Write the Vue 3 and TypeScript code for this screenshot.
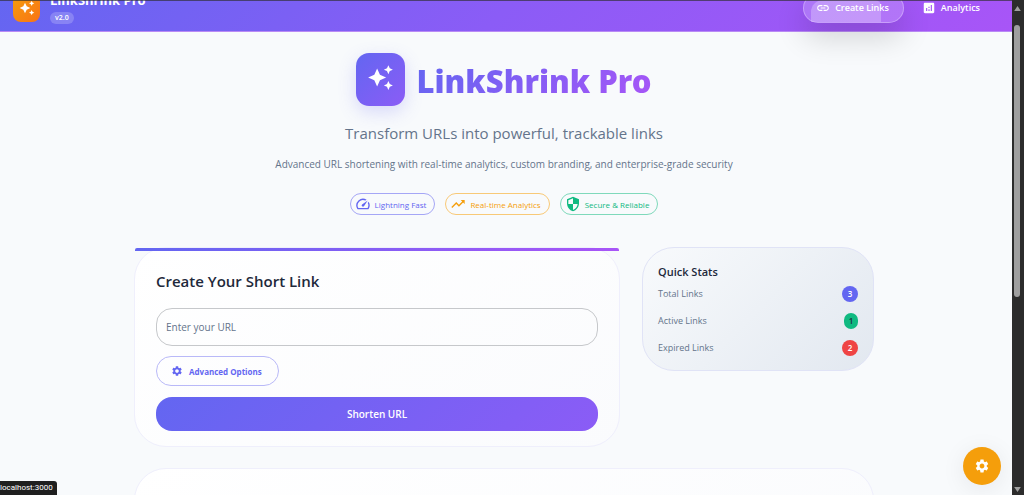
<script setup lang="ts">
import { ref } from 'vue'

interface Feature {
  label: string
  tone: string
  paths: string[]
}

interface Stat {
  label: string
  value: number
  tone: string
}

const sparkle =
  'm19 9 1.25-2.75L23 5l-2.75-1.25L19 1l-1.25 2.75L15 5l2.75 1.25L19 9zm-7.5.5L9 4 6.5 9.5 1 12l5.5 2.5L9 20l2.5-5.5L17 12l-5.5-2.5zM19 15l-1.25 2.75L15 19l2.75 1.25L19 23l1.25-2.75L23 19l-2.75-1.25L19 15z'
const gear =
  'M19.14 12.94c.04-.3.06-.61.06-.94 0-.32-.02-.64-.07-.94l2.03-1.58c.18-.14.23-.41.12-.61l-1.92-3.32c-.12-.22-.37-.29-.59-.22l-2.39.96c-.5-.38-1.03-.7-1.62-.94l-.36-2.54c-.04-.24-.24-.41-.48-.41h-3.84c-.24 0-.43.17-.47.41l-.36 2.54c-.59.24-1.13.57-1.62.94l-2.39-.96c-.22-.08-.47 0-.59.22L2.74 8.87c-.12.21-.08.47.12.61l2.03 1.58c-.05.3-.09.63-.09.94s.02.64.07.94l-2.03 1.58c-.18.14-.23.41-.12.61l1.92 3.32c.12.22.37.29.59.22l2.39-.96c.5.38 1.03.7 1.62.94l.36 2.54c.05.24.24.41.48.41h3.84c.24 0 .44-.17.47-.41l.36-2.54c.59-.24 1.13-.56 1.62-.94l2.39.96c.22.08.47 0 .59-.22l1.92-3.32c.12-.22.07-.47-.12-.61l-2.01-1.58zM12 15.6c-1.98 0-3.6-1.62-3.6-3.6s1.62-3.6 3.6-3.6 3.6 1.62 3.6 3.6-1.62 3.6-3.6 3.6z'

const features: Feature[] = [
  {
    label: 'Lightning Fast',
    tone: 'indigo',
    paths: [
      'm20.38 8.57-1.23 1.85a8 8 0 0 1-.22 7.58H5.07A8 8 0 0 1 15.58 6.85l1.85-1.23A10 10 0 0 0 3.35 19a2 2 0 0 0 1.72 1h13.85a2 2 0 0 0 1.74-1 10 10 0 0 0-.27-10.44z',
      'M10.59 15.41a2 2 0 0 0 2.83 0l5.66-8.49-8.49 5.66a2 2 0 0 0 0 2.83z',
    ],
  },
  {
    label: 'Real-time Analytics',
    tone: 'amber',
    paths: ['m16 6 2.29 2.29-4.88 4.88-4-4L2 16.59 3.41 18l6-6 4 4 6.3-6.29L22 12V6z'],
  },
  {
    label: 'Secure & Reliable',
    tone: 'green',
    paths: [
      'M12 1 3 5v6c0 5.55 3.84 10.74 9 12 5.16-1.26 9-6.45 9-12V5l-9-4zm0 10.99h7c-.53 4.12-3.28 7.79-7 8.94V12H5V6.3l7-3.11v8.8z',
    ],
  },
]

const stats: Stat[] = [
  { label: 'Total Links', value: 3, tone: 'indigo' },
  { label: 'Active Links', value: 1, tone: 'green' },
  { label: 'Expired Links', value: 2, tone: 'red' },
]

const url = ref('')
</script>

<template>
  <div class="window">
    <div class="page">
      <header class="header">
        <div class="brand">
          <span class="brand-icon">
            <svg viewBox="0 0 24 24" aria-hidden="true"><path :d="sparkle" /></svg>
          </span>
          <div class="brand-text">
            <span class="brand-name">LinkShrink Pro</span>
            <span class="version">v2.0</span>
          </div>
        </div>
        <nav class="nav">
          <button type="button" class="nav-button active">
            <svg viewBox="0 0 24 24" aria-hidden="true">
              <path d="M3.9 12c0-1.71 1.39-3.1 3.1-3.1h4V7H7c-2.76 0-5 2.24-5 5s2.24 5 5 5h4v-1.9H7c-1.71 0-3.1-1.39-3.1-3.1zM8 13h8v-2H8v2zm9-6h-4v1.9h4c1.71 0 3.1 1.39 3.1 3.1s-1.39 3.1-3.1 3.1h-4V17h4c2.76 0 5-2.24 5-5s-2.24-5-5-5z" />
            </svg>
            <span>Create Links</span>
          </button>
          <button type="button" class="nav-button">
            <svg viewBox="0 0 24 24" aria-hidden="true">
              <path d="M19 3H5c-1.1 0-2 .9-2 2v14c0 1.1.9 2 2 2h14c1.1 0 2-.9 2-2V5c0-1.1-.9-2-2-2zM9 17H7v-5h2v5zm4 0h-2v-3h2v3zm0-5h-2v-2h2v2zm4 5h-2V7h2v10z" />
            </svg>
            <span>Analytics</span>
          </button>
        </nav>
      </header>

      <main class="content">
        <section class="hero">
          <div class="hero-title">
            <span class="hero-icon">
              <svg viewBox="0 0 24 24" aria-hidden="true"><path :d="sparkle" /></svg>
            </span>
            <h1>LinkShrink Pro</h1>
          </div>
          <p class="tagline">Transform URLs into powerful, trackable links</p>
          <p class="description">
            Advanced URL shortening with real-time analytics, custom branding, and enterprise-grade security
          </p>
          <ul class="features">
            <li v-for="feature in features" :key="feature.label" :class="['feature', feature.tone]">
              <svg viewBox="0 0 24 24" aria-hidden="true">
                <path v-for="d in feature.paths" :key="d" :d="d" />
              </svg>
              <span>{{ feature.label }}</span>
            </li>
          </ul>
        </section>

        <div class="columns">
          <form class="card create" @submit.prevent>
            <h2>Create Your Short Link</h2>
            <input v-model="url" class="url" type="text" placeholder="Enter your URL" aria-label="Enter your URL" />
            <button type="button" class="advanced">
              <svg viewBox="0 0 24 24" aria-hidden="true"><path :d="gear" /></svg>
              <span>Advanced Options</span>
            </button>
            <button type="submit" class="submit">Shorten URL</button>
          </form>

          <aside class="stats">
            <h3>Quick Stats</h3>
            <dl>
              <div v-for="stat in stats" :key="stat.label" class="stat">
                <dt>{{ stat.label }}</dt>
                <dd :class="stat.tone">{{ stat.value }}</dd>
              </div>
            </dl>
          </aside>
        </div>

        <section class="card links"></section>
      </main>

      <button type="button" class="fab" aria-label="Settings">
        <svg viewBox="0 0 24 24" aria-hidden="true"><path :d="gear" /></svg>
      </button>
      <div class="status">localhost:3000</div>
    </div>

    <div class="scrollbar" aria-hidden="true">
      <svg viewBox="0 0 8 6"><path d="M4 0 8 6H0z" /></svg>
      <span class="thumb"></span>
      <svg viewBox="0 0 8 6"><path d="M0 0h8L4 6z" /></svg>
    </div>
  </div>
</template>

<style>
body {
  margin: 0;
  background: #f8fafc;
}
</style>

<style scoped>
* {
  box-sizing: border-box;
}

.window {
  display: flex;
  height: 100vh;
  overflow: hidden;
  font-family: 'Open Sans', 'Noto Sans', sans-serif;
  color: #1e293b;
  background: #f8fafc;
}

svg {
  display: block;
  flex: none;
  fill: currentColor;
}

h1,
h2,
h3,
p,
ul,
dl,
dd {
  margin: 0;
  padding: 0;
}

button,
input {
  font-family: inherit;
}

.page {
  position: relative;
  flex: 1;
  min-width: 0;
  overflow: hidden;
}

.page::before {
  content: '';
  position: absolute;
  z-index: 1;
  top: 0;
  left: 0;
  right: 0;
  height: 1px;
  background: rgba(44, 44, 44, 0.65);
}

.header {
  display: flex;
  justify-content: space-between;
  align-items: center;
  height: 48px;
  margin-top: -16px;
  padding: 0 19px 0 13px;
  background: linear-gradient(135deg, #6366f1 0%, #8b5cf6 50%, #a855f7 100%);
  border-bottom: 1px solid #b98af5;
}

.brand {
  display: flex;
  align-items: center;
  gap: 10px;
}

.brand-icon {
  display: grid;
  place-items: center;
  width: 27px;
  height: 28px;
  border-radius: 8px;
  color: #fff;
  background: linear-gradient(135deg, #f59e0b, #f97316);
}

.brand-icon svg {
  width: 16px;
  height: 16px;
}

.brand-text {
  display: flex;
  flex-direction: column;
  align-items: flex-start;
  gap: 4px;
}

.brand-name {
  color: #fff;
  font-size: 13px;
  font-weight: 700;
  line-height: 16px;
}

.version {
  padding: 0 5px;
  border-radius: 6px;
  color: #fff;
  background: rgba(255, 255, 255, 0.2);
  font-size: 7px;
  font-weight: 600;
  line-height: 12px;
}

.nav {
  display: flex;
  gap: 5px;
}

.nav-button {
  display: flex;
  align-items: center;
  gap: 5px;
  height: 30px;
  padding: 0 12px;
  border: 1px solid transparent;
  border-radius: 15px;
  color: #fff;
  background: none;
  font-size: 9px;
  font-weight: 600;
}

.nav-button svg {
  width: 14px;
  height: 14px;
}

.nav-button.active {
  position: relative;
  padding: 0 14px 0 12px;
  border-color: rgba(255, 255, 255, 0.3);
  background: rgba(255, 255, 255, 0.18);
  box-shadow: 0 14px 30px rgba(0, 0, 0, 0.16);
}

.nav-button.active::before {
  content: '';
  position: absolute;
  top: 6px;
  bottom: 0;
  left: 7px;
  width: 70px;
  border-radius: 12px 6px 0 0;
  background: rgba(255, 255, 255, 0.25);
}

.content {
  max-width: 744px;
  margin: 0 auto;
  padding: 21px 4px 0 0;
}

.hero {
  display: flex;
  flex-direction: column;
  align-items: center;
  text-align: center;
}

.hero-title {
  display: flex;
  align-items: center;
  gap: 11px;
}

.hero-icon {
  display: grid;
  place-items: center;
  width: 49px;
  height: 53px;
  padding-bottom: 4px;
  border-radius: 13px;
  color: #fff;
  background: linear-gradient(135deg, #6366f1, #8b5cf6);
  box-shadow: 0 6px 18px rgba(99, 102, 241, 0.22);
}

.hero-icon svg {
  width: 27px;
  height: 27px;
}

h1 {
  padding-top: 2px;
  color: transparent;
  background: linear-gradient(135deg, #6366f1, #a855f7);
  background-clip: text;
  font-family: 'Noto Sans', 'Open Sans', sans-serif;
  font-size: 31px;
  font-weight: 900;
  line-height: 42px;
}

.tagline {
  margin-top: 15px;
  color: #64748b;
  font-size: 15px;
  line-height: 24px;
}

.description {
  margin-top: 11px;
  color: #64748b;
  font-size: 10px;
  line-height: 16px;
}

.features {
  display: flex;
  gap: 10px;
  margin-top: 21px;
  list-style: none;
}

.feature {
  display: flex;
  align-items: center;
  gap: 4px;
  height: 22px;
  padding: 0 8px 0 4px;
  border: 1px solid;
  border-radius: 11px;
  font-size: 8px;
}

.feature svg {
  width: 16px;
  height: 16px;
}

.feature.indigo {
  color: #6366f1;
  border-color: #a5a6f6;
}

.feature.amber {
  color: #f59e0b;
  border-color: #f8c977;
}

.feature.green {
  color: #10b981;
  border-color: #7fd9bb;
}

.columns {
  display: grid;
  grid-template-columns: minmax(0, 486fr) minmax(0, 232fr);
  align-items: start;
  gap: 22px;
  margin-top: 32px;
}

.card {
  border: 1px solid #efeffc;
  border-radius: 32px;
  background: linear-gradient(145deg, #fff, #fafbfd);
}

.create {
  position: relative;
  display: flex;
  flex-direction: column;
  align-items: flex-start;
  padding: 19px 21px 15px;
}

.create::before {
  content: '';
  position: absolute;
  top: 0;
  left: 0;
  right: 0;
  height: 3px;
  border-radius: 2px 2px 0 0;
  background: linear-gradient(90deg, #6366f1, #a855f7);
}

h2 {
  font-size: 15px;
  font-weight: 600;
  line-height: 28px;
}

.url {
  width: 100%;
  height: 38px;
  margin-top: 13px;
  padding: 0 9px;
  border: 1px solid #c6c8cb;
  border-radius: 16px;
  outline: none;
  color: #1e293b;
  background: transparent;
  font-size: 10px;
}

.url::placeholder {
  color: #64748b;
  opacity: 1;
}

.advanced {
  display: flex;
  align-items: center;
  gap: 6px;
  height: 30px;
  margin-top: 10px;
  padding: 0 16px 0 14px;
  border: 1px solid #b9b9f8;
  border-radius: 15px;
  color: #6366f1;
  background: transparent;
  font-size: 8px;
  font-weight: 700;
}

.advanced svg {
  width: 12px;
  height: 12px;
}

.submit {
  width: 100%;
  height: 34px;
  margin-top: 11px;
  padding: 0;
  border: 0;
  border-radius: 16px;
  color: #fff;
  background: linear-gradient(135deg, #6366f1, #8b5cf6);
  font-size: 10px;
  font-weight: 600;
}

.stats {
  padding: 16px 15px 9px;
  border: 1px solid #e0e3f6;
  border-radius: 32px;
  background: linear-gradient(135deg, #f8fafc, #e2e8f0);
}

h3 {
  font-size: 11px;
  font-weight: 600;
  line-height: 16px;
}

.stat {
  display: flex;
  align-items: center;
  justify-content: space-between;
  height: 27px;
}

dt {
  color: #64748b;
  font-size: 9px;
}

dd {
  min-width: 16px;
  border-radius: 8px;
  color: #fff;
  font-size: 8px;
  font-weight: 600;
  line-height: 16px;
  text-align: center;
}

dd.indigo {
  background: #6366f1;
}

dd.green {
  min-width: 14px;
  color: #1e293b;
  background: #10b981;
}

dd.red {
  background: #ef4444;
}

.links {
  height: 120px;
  margin-top: 21px;
}

.fab {
  position: absolute;
  right: 11px;
  bottom: 10px;
  display: grid;
  place-items: center;
  width: 38px;
  height: 38px;
  padding: 0;
  border: 0;
  border-radius: 50%;
  color: #fff;
  background: #f59e0b;
  box-shadow: 0 4px 24px rgba(15, 23, 42, 0.08);
}

.fab svg {
  width: 16px;
  height: 16px;
}

.status {
  position: absolute;
  left: 0;
  bottom: 0;
  padding-right: 4px;
  border-top-right-radius: 3px;
  color: #fff;
  background: #1f1f1f;
  font-family: Roboto, sans-serif;
  font-size: 8px;
  line-height: 14px;
}

.scrollbar {
  display: flex;
  flex-direction: column;
  align-items: center;
  width: 12px;
  padding: 6px 2px 3px 0;
  background: #2c2c2c;
}

.scrollbar svg {
  width: 7px;
  height: 5px;
  fill: #9f9f9f;
}

.thumb {
  width: 6px;
  height: 56%;
  margin: 14px 0 auto;
  border-radius: 3px;
  background: #9f9f9f;
}
</style>
